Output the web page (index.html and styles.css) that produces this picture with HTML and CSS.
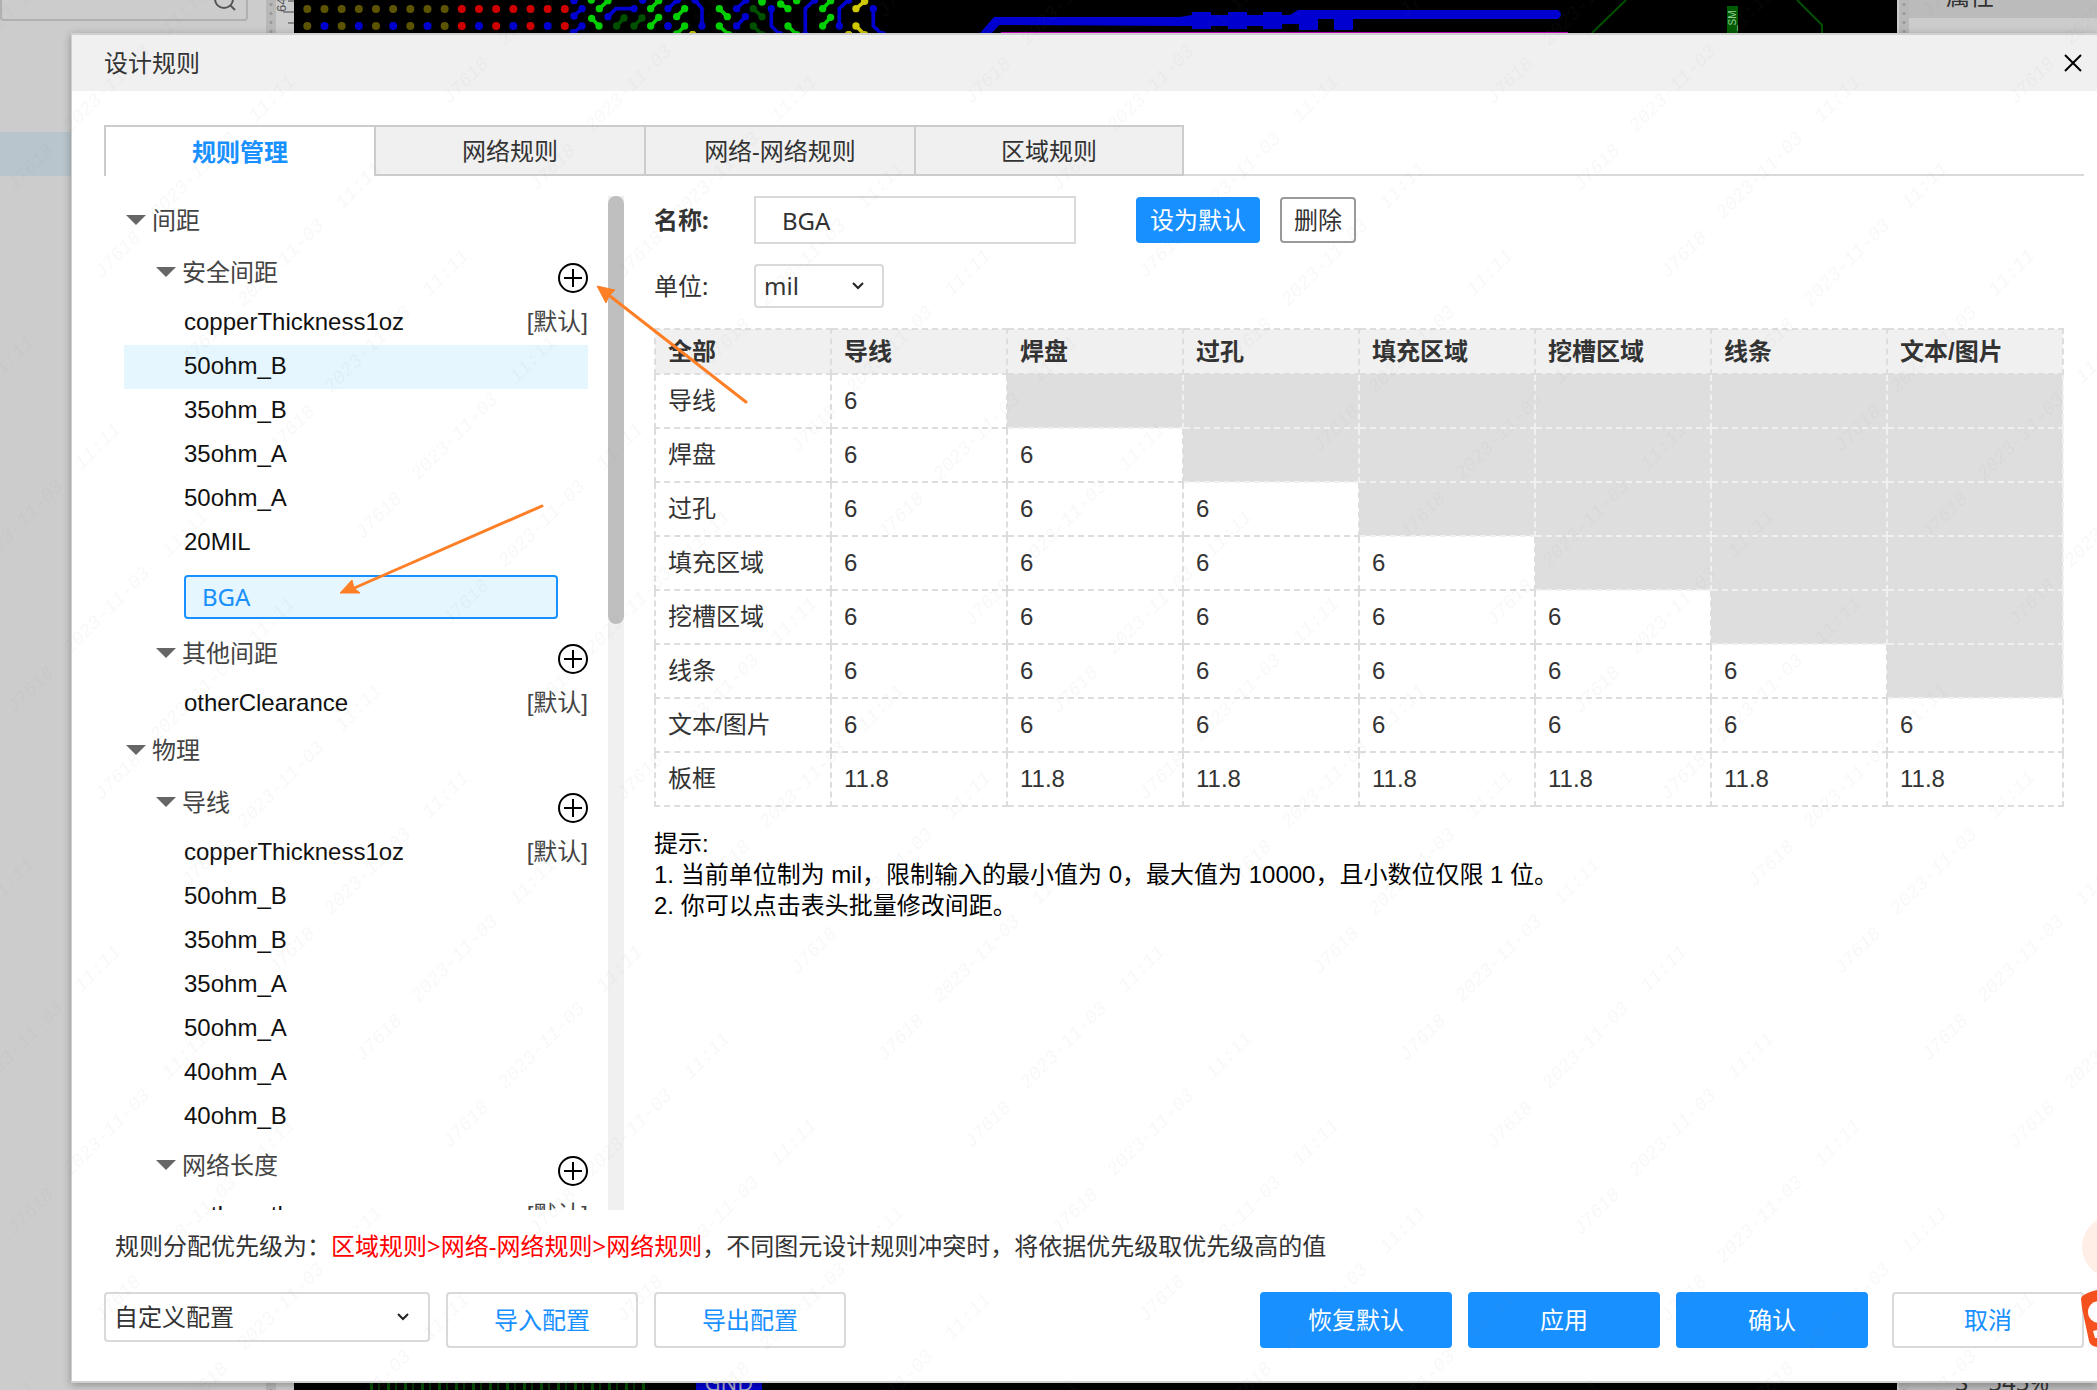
FILE: index.html
```html
<!DOCTYPE html>
<html lang="zh-CN">
<head>
<meta charset="utf-8">
<title>设计规则</title>
<link rel="stylesheet" href="styles.css">
</head>
<body>
<div class="workspace">
  <aside class="side-left">
    <div class="search-box">
      <svg class="search-icon" viewBox="0 0 26 24" aria-hidden="true"><circle cx="12" cy="12" r="9"/><path d="M18 18l5 5"/></svg>
    </div>
    <div class="side-row"></div>
  </aside>
  <div class="splitter"></div>
  <div class="ruler">
    <svg viewBox="0 0 18 33" aria-hidden="true"><path d="M12 1h6M7 12h11M12 23h6"/><text transform="translate(10 12) rotate(-90)">640</text></svg>
  </div>
  <div class="board">
    <svg class="board-art" viewBox="294 0 1603 33" preserveAspectRatio="xMinYMin" aria-hidden="true">
      <defs>
        <marker id="g" markerUnits="userSpaceOnUse" markerWidth="24" markerHeight="24" refX="12" refY="12"><circle cx="12" cy="12" r="11" fill="#00d000"/></marker>
        <marker id="d" markerUnits="userSpaceOnUse" markerWidth="24" markerHeight="24" refX="12" refY="12"><circle cx="12" cy="12" r="11" fill="#005000"/></marker>
        <marker id="b" markerUnits="userSpaceOnUse" markerWidth="24" markerHeight="24" refX="12" refY="12"><circle cx="12" cy="12" r="11" fill="#0000d0"/></marker>
        <marker id="y" markerUnits="userSpaceOnUse" markerWidth="24" markerHeight="24" refX="12" refY="12"><circle cx="12" cy="12" r="11" fill="#d0c800"/></marker>
      </defs>
      <g class="pads">
        <path stroke="#5c5400" stroke-dasharray="0 17.17" d="M307.3 9H446"/>
        <path stroke="#d00000" stroke-dasharray="0 17.17" d="M461.8 9H566"/>
        <path stroke="#5c5400" stroke-dasharray="0 34.34" d="M307.3 26H446"/>
        <path stroke="#0000d0" stroke-dasharray="0 34.34" d="M324.5 26H430"/>
        <path stroke="#d00000" stroke-dasharray="0 34.34" d="M461.8 26H566"/>
        <path stroke="#0000d0" stroke-dasharray="0 34.34" d="M479 26H550"/>
      </g>
      <g class="traces" transform="translate(580 0) scale(.3333)">
        <g stroke="#0000d0" marker-start="url(#b)" marker-end="url(#b)">
          <path d="M-18 2L-18 0"/><path d="M-18 48L6 26"/><path d="M6 78L-20 98"/><path d="M84 50L108 26H162"/><path d="M264 26L292 0"/><path d="M264 78V78"/>
          <path d="M366 78V26L345 0"/><path d="M470 26L498 0"/><path d="M470 78L496 50"/><path d="M574 26V78L600 104"/><path d="M676 104V26L704 0"/><path d="M778 78V26L806 0"/><path d="M880 26V78L908 104"/><path d="M188 0V0"/>
        </g>
        <g stroke="#00d000" marker-start="url(#g)" marker-end="url(#g)">
          <path d="M35 55L57 78"/><path d="M58 26L84 2"/><path d="M212 26L236 2"/><path d="M212 78L236 52"/><path d="M290 50L314 26"/><path d="M290 102L314 78"/><path d="M418 26L442 50"/><path d="M418 78L446 104"/><path d="M546 6V4"/><path d="M602 12L624 26"/><path d="M624 78L650 104"/><path d="M650 2V0"/><path d="M728 26L752 2"/><path d="M728 78L752 52"/><path d="M34 0V-4"/>
        </g>
        <g stroke="#005000" marker-start="url(#d)" marker-end="url(#d)">
          <path d="M110 78L132 54"/><path d="M162 78L186 54"/><path d="M520 26L546 50"/><path d="M520 78L546 104"/>
        </g>
        <g stroke="#d0c800" marker-start="url(#y)" marker-end="url(#y)">
          <path d="M828 26L854 4"/><path d="M828 78L854 104"/><path d="M338 104V104"/><path d="M806 104V104"/>
        </g>
      </g>
      <path fill="#0000d0" d="M980 33L994 17H1180L1192 15V12H1211V15H1228V12H1247V15H1263V12H1282V15H1290L1298 10H1558Q1564 14 1558 19H1353V30H1334V19H1318V30H1299V24H1282V29H1263V26H1247V29H1228V26H1211V29H1192V26H1180L999 25L992 33Z"/>
      <path fill="#c000c0" d="M1001 32H1568V33H1001z"/>
      <path fill="none" stroke="#005000" stroke-width="2" d="M1626 0L1592 33M1797 0L1822 25V33"/>
      <path fill="#005c00" d="M1727 6h11v27h-11z"/>
      <text class="pad-name" transform="translate(1736 31) rotate(-90)">_SM</text>
    </svg>
    <div class="board-foot"><span class="fins"></span><span class="net-name">GND</span></div>
  </div>
  <div class="splitter splitter-right"></div>
  <aside class="side-right">
    <div class="side-title">属性</div>
    <div class="side-status"><span>S</span><span>545%</span></div>
  </aside>
</div>

<main class="dialog" role="dialog" aria-labelledby="dialog-title">
  <header class="dialog-head">
    <h1 id="dialog-title">设计规则</h1>
    <button class="close" aria-label="关闭"><svg viewBox="0 0 18 18"><path d="M1 1l16 16M17 1L1 17"/></svg></button>
  </header>

  <div class="dialog-body">
    <div class="tabs" role="tablist">
      <button class="tab active" role="tab" aria-selected="true">规则管理</button>
      <button class="tab" role="tab">网络规则</button>
      <button class="tab" role="tab">网络-网络规则</button>
      <button class="tab" role="tab">区域规则</button>
    </div>

    <div class="columns">
      <nav class="tree">
        <div class="tree-view">
          <section class="group">
            <h2><i class="caret"></i>间距</h2>
            <h3><i class="caret"></i>安全间距<button class="add" aria-label="添加"><svg viewBox="0 0 30 30"><circle cx="15" cy="15" r="14"/><path d="M6 15h18M15 6v18"/></svg></button></h3>
            <ul>
              <li>copperThickness1oz<span class="tag">[默认]</span></li>
              <li class="current">50ohm_B</li>
              <li>35ohm_B</li>
              <li>35ohm_A</li>
              <li>50ohm_A</li>
              <li>20MIL</li>
              <li class="editing"><input class="rename" aria-label="规则名称" value="BGA"></li>
            </ul>
            <h3><i class="caret"></i>其他间距<button class="add" aria-label="添加"><svg viewBox="0 0 30 30"><circle cx="15" cy="15" r="14"/><path d="M6 15h18M15 6v18"/></svg></button></h3>
            <ul>
              <li>otherClearance<span class="tag">[默认]</span></li>
            </ul>
          </section>
          <section class="group">
            <h2><i class="caret"></i>物理</h2>
            <h3><i class="caret"></i>导线<button class="add" aria-label="添加"><svg viewBox="0 0 30 30"><circle cx="15" cy="15" r="14"/><path d="M6 15h18M15 6v18"/></svg></button></h3>
            <ul>
              <li>copperThickness1oz<span class="tag">[默认]</span></li>
              <li>50ohm_B</li>
              <li>35ohm_B</li>
              <li>35ohm_A</li>
              <li>50ohm_A</li>
              <li>40ohm_A</li>
              <li>40ohm_B</li>
            </ul>
            <h3><i class="caret"></i>网络长度<button class="add" aria-label="添加"><svg viewBox="0 0 30 30"><circle cx="15" cy="15" r="14"/><path d="M6 15h18M15 6v18"/></svg></button></h3>
            <ul>
              <li>netLength<span class="tag">[默认]</span></li>
            </ul>
          </section>
        </div>
        <div class="scroll-track"><div class="scroll-thumb"></div></div>
      </nav>

      <section class="detail">
        <div class="field name-field">
          <label class="strong" for="rule-name">名称:</label>
          <input id="rule-name" class="name-input" value="BGA">
          <button class="btn-small primary">设为默认</button>
          <button class="btn-small outline">删除</button>
        </div>
        <div class="field unit-field">
          <label for="unit">单位:</label>
          <span class="select unit-select">
            <select id="unit"><option>mil</option></select>
            <svg viewBox="0 0 14 10" aria-hidden="true"><path d="M2 2l5 5 5-5"/></svg>
          </span>
        </div>

        <table class="matrix">
          <thead>
            <tr><th>全部</th><th>导线</th><th>焊盘</th><th>过孔</th><th>填充区域</th><th>挖槽区域</th><th>线条</th><th>文本/图片</th></tr>
          </thead>
          <tbody>
            <tr><td>导线</td><td>6</td><td class="off"></td><td class="off"></td><td class="off"></td><td class="off"></td><td class="off"></td><td class="off"></td></tr>
            <tr><td>焊盘</td><td>6</td><td>6</td><td class="off"></td><td class="off"></td><td class="off"></td><td class="off"></td><td class="off"></td></tr>
            <tr><td>过孔</td><td>6</td><td>6</td><td>6</td><td class="off"></td><td class="off"></td><td class="off"></td><td class="off"></td></tr>
            <tr><td>填充区域</td><td>6</td><td>6</td><td>6</td><td>6</td><td class="off"></td><td class="off"></td><td class="off"></td></tr>
            <tr><td>挖槽区域</td><td>6</td><td>6</td><td>6</td><td>6</td><td>6</td><td class="off"></td><td class="off"></td></tr>
            <tr><td>线条</td><td>6</td><td>6</td><td>6</td><td>6</td><td>6</td><td>6</td><td class="off"></td></tr>
            <tr><td>文本/图片</td><td>6</td><td>6</td><td>6</td><td>6</td><td>6</td><td>6</td><td>6</td></tr>
            <tr><td>板框</td><td>11.8</td><td>11.8</td><td>11.8</td><td>11.8</td><td>11.8</td><td>11.8</td><td>11.8</td></tr>
          </tbody>
        </table>

        <div class="hints">
          <p>提示:</p>
          <p>1. 当前单位制为 mil，限制输入的最小值为 0，最大值为 10000，且小数位仅限 1 位。</p>
          <p>2. 你可以点击表头批量修改间距。</p>
        </div>
      </section>
    </div>

    <p class="priority">规则分配优先级为：<em>区域规则&gt;网络-网络规则&gt;网络规则</em>，不同图元设计规则冲突时，将依据优先级取优先级高的值</p>

    <footer class="actions">
      <span class="select config-select">
        <select aria-label="配置"><option>自定义配置</option></select>
        <svg viewBox="0 0 14 10" aria-hidden="true"><path d="M2 2l5 5 5-5"/></svg>
      </span>
      <button class="btn">导入配置</button>
      <button class="btn">导出配置</button>
      <button class="btn primary push">恢复默认</button>
      <button class="btn primary">应用</button>
      <button class="btn primary">确认</button>
      <button class="btn cancel">取消</button>
    </footer>
  </div>
</main>

<svg class="arrows" aria-hidden="true">
  <path class="shaft" d="M746 402L606 293M542 506L352 589"/>
  <path class="tip" d="M597 286L615 290L609 296L606 303ZM340 593L352 580L354 588L360 593Z"/>
</svg>

<svg class="mascot" viewBox="0 0 18 130" aria-hidden="true">
  <circle cx="34" cy="30" r="31" fill="#feeee6"/>
  <path fill="#f4511e" d="M2 82Q2 77 18 73V130Q11 129 10 124L3 91Z"/>
  <circle cx="20" cy="95" r="11" fill="#fff"/>
  <path fill="#fff" d="M14 114l4-1v8h-2z"/>
</svg>

<svg class="watermark" aria-hidden="true">
  <defs>
    <g id="mark">
      <text transform="translate(0 0) rotate(-45)">2023-11-03</text>
      <text transform="translate(-163 -8) rotate(-45)">J7618</text>
      <text transform="translate(165 10) rotate(-45)">11:11</text>
    </g>
    <g id="marks">
      <use href="#mark" x="20" y="2"/><use href="#mark" x="107" y="89"/><use href="#mark" x="194" y="176"/>
      <use href="#mark" x="281" y="263"/><use href="#mark" x="368" y="350"/><use href="#mark" x="455" y="437"/>
    </g>
    <g id="band">
      <use href="#marks" x="-522"/><use href="#marks"/><use href="#marks" x="522"/>
    </g>
    <pattern id="tile" width="522" height="522" patternUnits="userSpaceOnUse">
      <use href="#band" y="-522"/><use href="#band"/><use href="#band" y="522"/>
    </pattern>
  </defs>
  <rect width="100%" height="100%" fill="url(#tile)"/>
</svg>
</body>
</html>
```

FILE: styles.css
```css
* { box-sizing: border-box; }

body {
  margin: 0;
  height: 100vh;
  overflow: hidden;
  position: relative;
  font: 24px/32px "Noto Sans", "Noto Sans CJK SC", sans-serif;
  color: #333;
  background: #ccc;
}

button, input, select { font: inherit; color: inherit; margin: 0; }
h1, h2, h3, p, ul { margin: 0; padding: 0; font-size: 24px; font-weight: 400; }
ul { list-style: none; }

/* Editor behind the dialog */
.workspace { display: flex; height: 100vh; overflow: hidden; }
.side-left { width: 266px; }
.search-box {
  width: 248px;
  height: 50px;
  margin-top: -29px;
  border: 2px solid #b0b0b0;
  border-radius: 4px;
  display: flex;
  justify-content: flex-end;
  align-items: flex-end;
  padding: 0 8px 8px;
}
.search-icon { width: 26px; height: 24px; fill: none; stroke: #555; stroke-width: 2; }
.side-row { margin-top: 111px; height: 44px; background: #b8c5cc; }
.splitter {
  width: 10px;
  background: #b8b8b8 radial-gradient(circle, #999 1px, transparent 2px) center top / 10px 9px repeat-y;
}
.ruler { width: 18px; background: #ccc; }
.ruler svg { display: block; width: 18px; height: 33px; fill: none; stroke: #444; stroke-width: 1; }
.ruler text { font: 13px "Liberation Sans", sans-serif; fill: #555; stroke: none; }
.board { flex: 1; background: #000; display: flex; flex-direction: column; justify-content: space-between; overflow: hidden; }
.board-art { display: block; width: 1603px; height: 33px; }
.pads { fill: none; stroke-width: 8; stroke-linecap: round; }
.traces { fill: none; stroke-width: 11; }
.pad-name { font: 10px "Liberation Sans", sans-serif; fill: #9c9; }
.board-foot { display: flex; height: 10px; padding-left: 76px; gap: 46px; }
.fins { width: 280px; background: repeating-linear-gradient(90deg, #005000 0 3px, #000 3px 8px, #003800 8px 10px, #000 10px 17px); }
.net-name { width: 66px; background: #0000d0; color: #aac; text-align: center; font-size: 22px; line-height: 4px; }
.splitter-right { width: 12px; border-left: 2px solid #ccc; }
.side-right { width: 188px; display: flex; flex-direction: column; justify-content: space-between; }
.side-title { height: 42px; margin-top: -24px; padding-left: 37px; line-height: 40px; background: #bbb; }
.side-status { height: 10px; padding-left: 46px; display: flex; gap: 20px; line-height: 4px; background: #bbb; }

/* Dialog */
.dialog {
  position: absolute;
  top: 33px;
  left: 71px;
  right: 0;
  bottom: 7px;
  display: flex;
  flex-direction: column;
  background: #fff;
  border: 2px solid #d0d0d0;
  border-width: 2px 0 2px 1px;
  box-shadow: 0 2px 8px rgba(0, 0, 0, .3);
}
.dialog-head {
  height: 56px;
  padding: 0 15px 0 32px;
  display: flex;
  align-items: center;
  justify-content: space-between;
  background: #f0f0f0;
}
.close { border: 0; padding: 0; background: none; width: 18px; height: 18px; display: flex; }
.close svg { width: 18px; height: 18px; fill: none; stroke: #000; stroke-width: 2; }
.dialog-body { flex: 1; min-height: 0; display: flex; flex-direction: column; padding: 34px 13px 33px 32px; }

.tabs { display: flex; border-bottom: 2px solid #d9d9d9; }
.tab {
  width: 270px;
  height: 51px;
  margin-bottom: -2px;
  padding: 0;
  border: 2px solid #ccc;
  border-left-width: 0;
  background: #f0f0f0;
}
.tab:last-child { width: 268px; }
.tab.active { width: 272px; border-left-width: 2px; border-bottom: 0; background: #fff; color: #1890ff; font-weight: 700; }

.columns { flex: 1; min-height: 0; display: flex; gap: 30px; padding-top: 20px; }

/* Rule tree */
.tree { width: 520px; flex: none; display: flex; justify-content: space-between; }
.tree-view { width: 484px; padding-left: 20px; overflow: hidden; color: #444; }
.caret { width: 0; height: 0; margin-right: 6px; border: 10px solid transparent; border-top-color: #666; border-bottom: 0; }
h2, h3 { display: flex; align-items: center; }
.group h2 { height: 50px; padding: 0 0 2px 2px; }
.group h3 { height: 55px; padding: 0 0 4px 32px; }
.add { width: 30px; height: 30px; margin: 13px 0 0 auto; padding: 0; border: 0; background: none; }
.add svg { display: block; width: 30px; height: 30px; fill: none; stroke: #000; stroke-width: 2; }
.tree li {
  height: 44px;
  padding: 0 0 2px 60px;
  display: flex;
  align-items: center;
  justify-content: space-between;
  font-family: "Liberation Sans", "Noto Sans CJK SC", sans-serif;
  color: #111;
}
.tree li.current { background: #e5f6fe; }
.tree li.editing { height: 62px; padding-bottom: 8px; align-items: flex-end; }
.tag { color: #444; }
.rename {
  width: 374px;
  height: 44px;
  padding: 0 16px 2px;
  border: 2px solid #1890ff;
  border-radius: 4px;
  background: #e5f6fe;
  color: #1890ff;
  font-family: "Noto Sans", sans-serif;
}
.scroll-track { width: 16px; background: #f0f0f0; }
.scroll-thumb { height: 428px; border-radius: 8px; background: #bfbfbf; }

/* Rule detail */
.detail { flex: 1; padding-right: 20px; }
.field { display: flex; align-items: center; }
.field label { width: 100px; }
.strong { font-weight: 700; }
.name-field { height: 48px; }
.name-input { width: 322px; height: 48px; margin-right: 60px; padding: 0 26px; border: 2px solid #d9d9d9; background: #fff; }
.btn-small { height: 46px; padding: 0 12px; border: 2px solid #999; border-radius: 4px; background: #fff; }
.btn-small.primary { margin-right: 20px; border-color: #1890ff; }
.unit-field { margin-top: 20px; }
.select { position: relative; display: inline-flex; }
.select select { width: 100%; appearance: none; border: 2px solid #d9d9d9; border-radius: 4px; background: #fff; padding: 0 8px; }
.select svg { position: absolute; width: 14px; height: 10px; top: 50%; margin-top: -5px; fill: none; stroke: #222; stroke-width: 2; pointer-events: none; }
.unit-select { width: 130px; height: 44px; }
.unit-select svg { right: 19px; }

.matrix { width: 100%; margin-top: 20px; border-collapse: collapse; table-layout: fixed; font-family: "Liberation Sans", "Noto Sans CJK SC", sans-serif; }
.matrix th, .matrix td { height: 54px; padding: 0 0 0 12px; border: 2px dashed #ddd; text-align: left; }
.matrix th { height: 45px; background: #f0f0f0; font-weight: 700; }
.matrix .off { background: #dedede; border-color: #f0f0f0; }

.hints { margin-top: 21px; color: #000; line-height: 31px; font-family: "Liberation Sans", "Noto Sans CJK SC", sans-serif; }

.priority { margin-top: 20px; padding-left: 11px; }
.priority em { color: #f00; font-style: normal; }

.actions { display: flex; gap: 16px; margin-top: 30px; }
.config-select { width: 326px; height: 50px; }
.config-select svg { right: 20px; }
.btn { width: 192px; height: 56px; padding: 0; border: 2px solid #d9d9d9; border-radius: 4px; background: #fff; color: #1890ff; }
.btn.primary, .primary { background: #1890ff; border-color: #1890ff; color: #fff; }
.push { margin-left: auto; }
.cancel { margin-left: 8px; }

/* Layers over the page */
.arrows, .watermark { position: absolute; top: 0; left: 0; width: 100%; height: 100%; pointer-events: none; }
.shaft { fill: none; stroke: #ff7f27; stroke-width: 3; stroke-linecap: round; }
.tip { fill: #ff7f27; stroke: #ff7f27; stroke-width: 1; }
.mascot { position: absolute; right: 0; bottom: 43px; width: 18px; height: 130px; }
.watermark text { font: italic 19px "Liberation Mono", monospace; fill: #808080; fill-opacity: .05; text-anchor: middle; dominant-baseline: middle; }
```
